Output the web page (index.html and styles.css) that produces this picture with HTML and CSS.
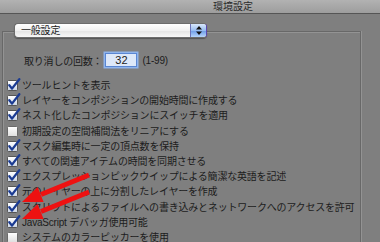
FILE: index.html
```html
<!DOCTYPE html>
<html lang="ja">
<head>
<meta charset="UTF-8">
<title>環境設定</title>
<link rel="stylesheet" href="styles.css">
</head>
<body>

<svg class="defs" width="0" height="0">
    <defs>
        <linearGradient id="cbfill" x1="0" y1="0" x2="0" y2="1">
            <stop offset="0" stop-color="#ffffff"/>
            <stop offset="0.5" stop-color="#e9eef6"/>
            <stop offset="1" stop-color="#c9d3e2"/>
        </linearGradient>
        <linearGradient id="cboff" x1="0" y1="0" x2="0" y2="1">
            <stop offset="0" stop-color="#ffffff"/>
            <stop offset="1" stop-color="#dedede"/>
        </linearGradient>
        <symbol id="cb-on" viewBox="0 0 14 13">
            <rect x="0.5" y="2.5" width="10" height="10" rx="1" fill="url(#cbfill)" stroke="#555"/>
            <path d="M2.3 7.2 L5 10.6 L12.3 1.2" fill="none" stroke="#1b3b92" stroke-width="2.3" stroke-linecap="round" stroke-linejoin="round"/>
        </symbol>
        <symbol id="cb-off" viewBox="0 0 14 13">
            <rect x="0.5" y="2.5" width="10" height="10" rx="1" fill="url(#cboff)" stroke="#6a6a6a"/>
        </symbol>
    </defs>
</svg>

<div class="window">

    <div class="titlebar">環境設定</div>

    <div class="group">
        <!-- section popup sits on the group border -->
        <div class="popup">
            <span class="popup-label">一般設定</span>
            <span class="popup-btn">
                <svg width="6" height="9" viewBox="0 0 6 9"><path d="M3 0 L6 3.5 H0 Z M0 5.5 H6 L3 9 Z" fill="#111"/></svg>
            </span>
        </div>

        <div class="undo-row">
            <span>取り消しの回数：</span>
            <span class="field">32</span>
            <span class="range">(1-99)</span>
        </div>

        <ul class="options">
            <li class="option"><svg class="cb"><use href="#cb-on"/></svg><span>ツールヒントを表示</span></li>
            <li class="option"><svg class="cb"><use href="#cb-on"/></svg><span>レイヤーをコンポジションの開始時間に作成する</span></li>
            <li class="option"><svg class="cb"><use href="#cb-on"/></svg><span>ネスト化したコンポジションにスイッチを適用</span></li>
            <li class="option"><svg class="cb"><use href="#cb-off"/></svg><span>初期設定の空間補間法をリニアにする</span></li>
            <li class="option"><svg class="cb"><use href="#cb-on"/></svg><span>マスク編集時に一定の頂点数を保持</span></li>
            <li class="option"><svg class="cb"><use href="#cb-on"/></svg><span>すべての関連アイテムの時間を同期させる</span></li>
            <li class="option"><svg class="cb"><use href="#cb-on"/></svg><span>エクスプレッションピックウイップによる簡潔な英語を記述</span></li>
            <li class="option"><svg class="cb"><use href="#cb-on"/></svg><span>元のレイヤーの上に分割したレイヤーを作成</span></li>
            <li class="option"><svg class="cb"><use href="#cb-on"/></svg><span>スクリプトによるファイルへの書き込みとネットワークへのアクセスを許可</span></li>
            <li class="option"><svg class="cb"><use href="#cb-on"/></svg><span>JavaScript デバッガ使用可能</span></li>
            <li class="option"><svg class="cb"><use href="#cb-off"/></svg><span>システムのカラーピッカーを使用</span></li>
        </ul>
    </div>

    <!-- red annotation arrows drawn over the list -->
    <svg class="annotations" width="380" height="242" viewBox="0 0 380 242">
        <line x1="89" y1="175" x2="41" y2="194.5" stroke="#ee1111" stroke-width="5"/>
        <polygon points="22,202 43.6,201.9 37.6,187.1" fill="#ee1111"/>
        <line x1="89" y1="192" x2="41" y2="211.5" stroke="#ee1111" stroke-width="5"/>
        <polygon points="22,219 43.6,218.9 37.6,204.1" fill="#ee1111"/>
    </svg>

</div>

</body>
</html>
```

FILE: styles.css
```css
body { margin: 0; background: #7f7f7f; font-family: "Liberation Sans", "Noto Sans CJK JP", sans-serif; font-size: 10px; color: #1c1c1c; }
.defs { position: absolute; }
.window { position: relative; width: 380px; height: 242px; overflow: hidden; }

.titlebar {
    height: 13px;
    line-height: 13px;
    padding-left: 213px;
    background: linear-gradient(#b2b2b2, #9d9d9d);
    border-bottom: 1px solid #555;
    color: #2a2a2a;
}

.group {
    height: 230px;
    margin: 17px 19px 0 2px;
    border: 1px solid #686868;
    border-bottom: none;
    box-shadow: inset 1px 1px 0 #939393, 1px 0 0 #939393;
}

.popup {
    display: flex;
    width: 193px;
    height: 15px;
    box-sizing: border-box;
    margin: -9px 0 0 11px;
    border: 1px solid #6c6c6c;
    border-right-color: #5a48b0;
    border-radius: 4px;
    background: linear-gradient(#ffffff, #f1f1f1 50%, #e3e3e3 51%, #f7f7f7);
    box-shadow: 0 1px 1px rgba(0, 0, 0, 0.35);
    overflow: hidden;
}
.popup-label { flex: 1; padding-left: 6px; line-height: 13px; letter-spacing: -0.2px; }
.popup-btn {
    width: 15px;
    display: flex;
    justify-content: center;
    align-items: center;
    border-left: 1px solid #6d74b8;
    background: linear-gradient(#d8e7fb, #98bdf1 50%, #6b9ae6 51%, #b5d5fb);
}

.undo-row { display: flex; align-items: center; gap: 3px; height: 16px; margin: 14px 0 0 21px; letter-spacing: -0.2px; }
.field {
    width: 32px;
    height: 14px;
    box-sizing: border-box;
    border: 1px solid #5a86d2;
    box-shadow: 0 0 0 1.5px #8fb4ec;
    background: #dde8f9;
    text-align: center;
    line-height: 12px;
    font-size: 11px;
    letter-spacing: 0;
}
.range { margin-left: 2px; }

.options { list-style: none; margin: 9px 0 0 4px; padding: 0; }
.option { display: flex; align-items: center; height: 15.2px; white-space: nowrap; letter-spacing: -0.2px; }
.cb { width: 14px; height: 13px; margin-right: 1px; flex-shrink: 0; }

.annotations { position: absolute; left: 0; top: 0; pointer-events: none; }
```
